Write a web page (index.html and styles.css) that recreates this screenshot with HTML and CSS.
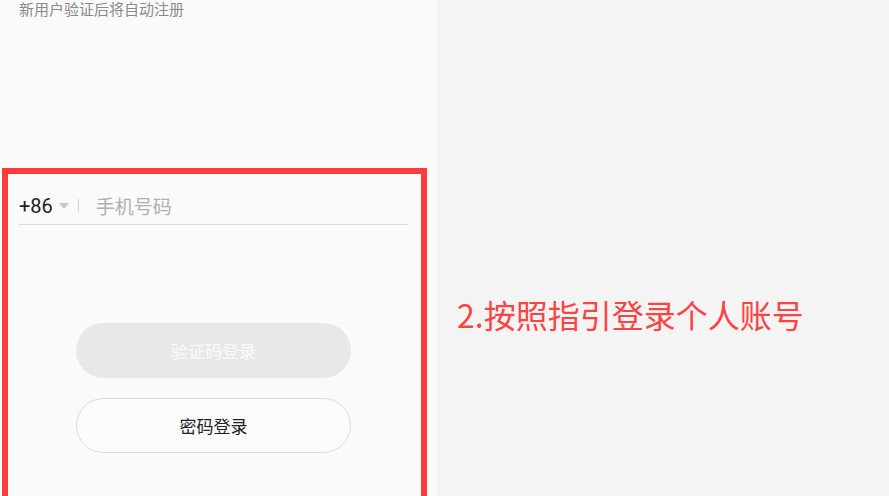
FILE: index.html
```html
<!DOCTYPE html>
<html lang="zh">
  <head>
    <meta charset="UTF-8" />
    <title>登录</title>
    <link rel="stylesheet" href="styles.css">
  </head>
  <body>
    <div class="phone">
      <p class="note">新用户验证后将自动注册</p>

      <div class="frame">
        <div class="field">
          <span class="code">+86</span>
          <span class="caret"></span>
          <span class="sep"></span>
          <span class="placeholder">手机号码</span>
        </div>

        <div class="actions">
          <button class="btn btn-sms">验证码登录</button>
          <button class="btn btn-pwd">密码登录</button>
        </div>
      </div>
    </div>

    <div class="guide">
      <h2 class="step">2.按照指引登录个人账号</h2>
    </div>
  </body>
</html>
```

FILE: styles.css
```css
html,
body {
  margin: 0;
  height: 496px;
  overflow: hidden;
}

body {
  display: flex;
  background: #f4f4f4;
  font-family: "Noto Sans CJK SC", "Noto Sans", sans-serif;
}

.phone {
  width: 437px;
  background: #fafafa;
  flex-shrink: 0;
}

.note {
  margin: 0 0 0 19px;
  font-size: 15px;
  line-height: 18px;
  color: #8a8a8a;
}

.frame {
  margin: 150px 0 0 2px;
  width: 389px;
  height: 360px;
  border: 6px solid #ff3b3b;
  border-bottom: none;
  padding: 0 13px 0 11px;
}

.field {
  margin-top: 16px;
  height: 35px;
  padding-bottom: 3px;
  box-sizing: border-box;
  display: flex;
  align-items: center;
  border-bottom: 1px solid #dcdcdc;
}

.code {
  font-family: Roboto, "Noto Sans", sans-serif;
  font-size: 20px;
  color: #222;
}

.caret {
  margin-left: 6px;
  width: 0;
  height: 0;
  border-left: 5px solid transparent;
  border-right: 5px solid transparent;
  border-top: 6px solid #c4c4c4;
}

.sep {
  margin-left: 9px;
  width: 1px;
  height: 13px;
  background: #d6d6d6;
}

.placeholder {
  margin-left: 17px;
  font-size: 19px;
  color: #b0b0b0;
}

.actions {
  margin-top: 98px;
  display: flex;
  flex-direction: column;
  align-items: center;
  gap: 20px;
}

.btn {
  width: 275px;
  height: 55px;
  border-radius: 28px;
  font-family: inherit;
  font-size: 17px;
}

.btn-sms {
  border: none;
  background: #e8e8e8;
  color: #fafafa;
}

.btn-pwd {
  border: 1px solid #dadada;
  background: #fbfbfb;
  color: #222;
}

.guide {
  flex: 1;
  padding: 294px 0 0 20px;
}

.step {
  margin: 0;
  font-size: 32px;
  font-weight: 400;
  line-height: 40px;
  color: #ff4343;
}
```
